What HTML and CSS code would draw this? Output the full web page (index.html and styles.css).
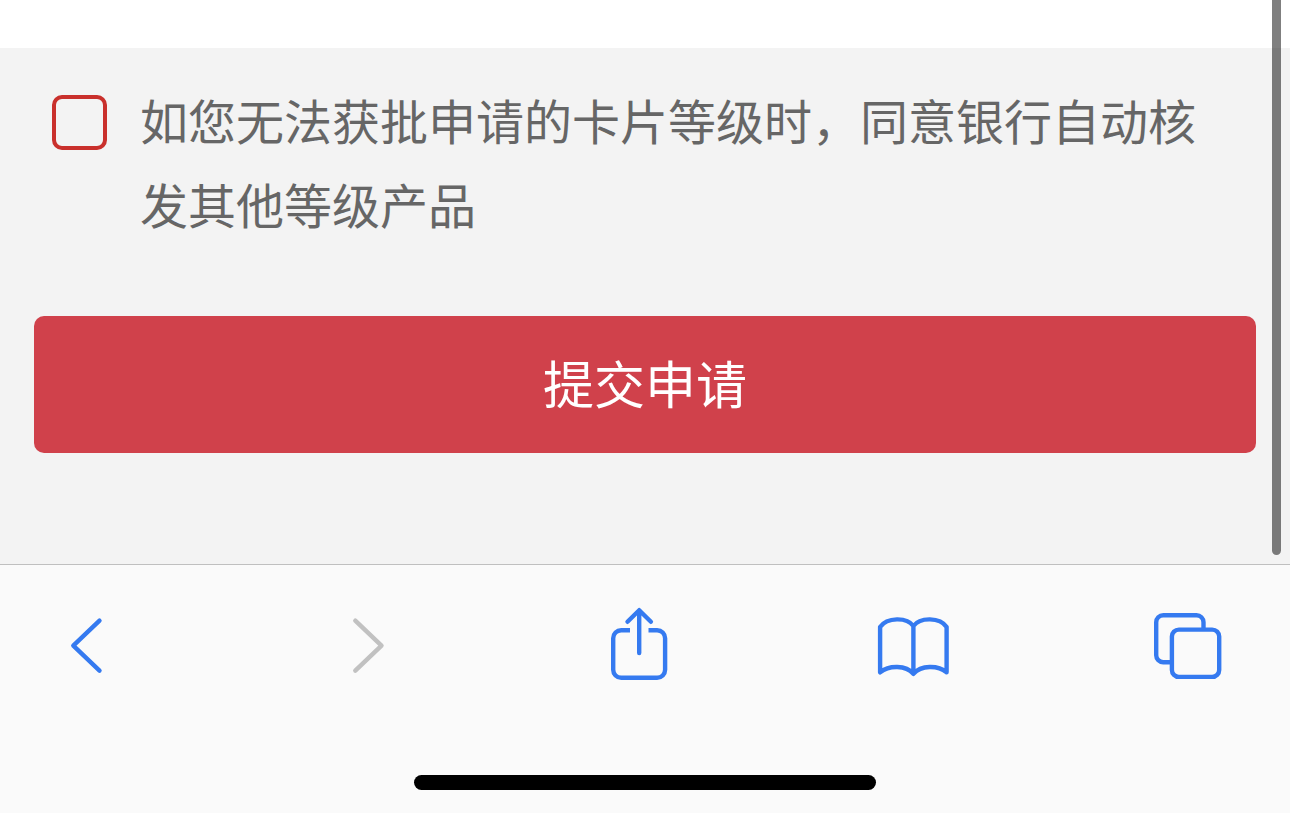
FILE: index.html
```html
<!DOCTYPE html>
<html lang="zh-CN">
<head>
    <meta charset="UTF-8">
    <title>提交申请</title>
    <link rel="stylesheet" href="styles.css">
</head>
<body>
    <div class="page">
        <div class="blank"></div>
        <div class="agree">
            <span class="checkbox"></span>
            <p>如您无法获批申请的卡片等级时，同意银行自动核发其他等级产品</p>
        </div>
        <button class="submit">提交申请</button>
        <div class="scrollbar"></div>
    </div>
    <div class="toolbar">
        <div class="icons">
            <svg width="80" height="90" viewBox="0 0 80 90">
                <path d="M49.5 20.7L23.3 45.7L49.5 70.7"/>
            </svg>
            <svg class="disabled" width="80" height="90" viewBox="0 0 80 90">
                <path d="M25.3 20.7L51.5 45.7L25.3 70.7"/>
            </svg>
            <svg width="90" height="90" viewBox="0 5 90 90">
                <path class="flat" d="M35 35.2H26.2A8 8 0 0 0 18.2 43.2V74.8A8 8 0 0 0 26.2 82.8H62.1A8 8 0 0 0 70.1 74.8V43.2A8 8 0 0 0 62.1 35.2H53.5"/>
                <path d="M44.2 58V15.5M32.5 26.8L44.2 15.2L55.9 26.8"/>
            </svg>
            <svg width="100" height="90" viewBox="0 0 100 90">
                <path d="M15.1 72.3V27C22 17 42 17 48.4 26C55 17 75 17 81.6 27V72.3C73 65 56 65 48.4 73.8C41 65 24 65 15.1 72.3ZM48.4 26V73.5"/>
            </svg>
            <svg width="100" height="90" viewBox="0 0 100 90">
                <path class="flat" d="M63.5 28V22.2A7 7 0 0 0 56.5 15.2H23.2A7 7 0 0 0 16.2 22.2V55.2A7 7 0 0 0 23.2 62.2H31"/>
                <rect x="31.9" y="29.6" width="47.3" height="47.3" rx="7"/>
            </svg>
        </div>
        <div class="home"></div>
    </div>
</body>
</html>
```

FILE: styles.css
```css
*{
    margin: 0;
    padding: 0;
    box-sizing: border-box;
}
body{
    width: 1290px;
    height: 813px;
    overflow: hidden;
    font-family: "Noto Sans CJK SC", sans-serif;
}
.page{
    position: relative;
    height: 564px;
    background-color: #f3f3f3;
}
.blank{
    height: 48px;
    background-color: #fff;
}
.agree{
    display: flex;
    height: 268px;
    padding: 29px 80px 0 52px;
}
.checkbox{
    flex: none;
    width: 55px;
    height: 55px;
    margin-top: 18px;
    margin-right: 33px;
    border: 4px solid #c9302c;
    border-radius: 10px;
}
.agree p{
    font-size: 48px;
    line-height: 84px;
    color: #666;
}
.submit{
    display: block;
    width: 1222px;
    height: 137px;
    margin: 0 34px;
    padding-bottom: 6px;
    border: none;
    border-radius: 10px;
    background-color: #d0414b;
    color: #fff;
    font-family: inherit;
    font-size: 51px;
}
.scrollbar{
    position: absolute;
    top: 0;
    right: 9px;
    width: 9px;
    height: 555px;
    border-radius: 0 0 5px 5px;
    background-color: rgba(0, 0, 0, 0.5);
}
.toolbar{
    height: 249px;
    padding-top: 35px;
    border-top: 1px solid #bfbfbf;
    background-color: #fafafa;
}
.icons{
    display: grid;
    grid-template-columns: 280px 265px 270px 275px 100px;
    padding-left: 50px;
}
.icons svg{
    display: block;
    fill: none;
    stroke: #357af0;
    stroke-width: 4.4;
    stroke-linecap: round;
    stroke-linejoin: round;
}
.icons .flat{
    stroke-linecap: butt;
}
.icons .disabled{
    stroke: #c1c1c1;
}
.home{
    width: 462px;
    height: 15px;
    margin: 85px auto 0;
    border-radius: 8px;
    background-color: #000;
}
```
